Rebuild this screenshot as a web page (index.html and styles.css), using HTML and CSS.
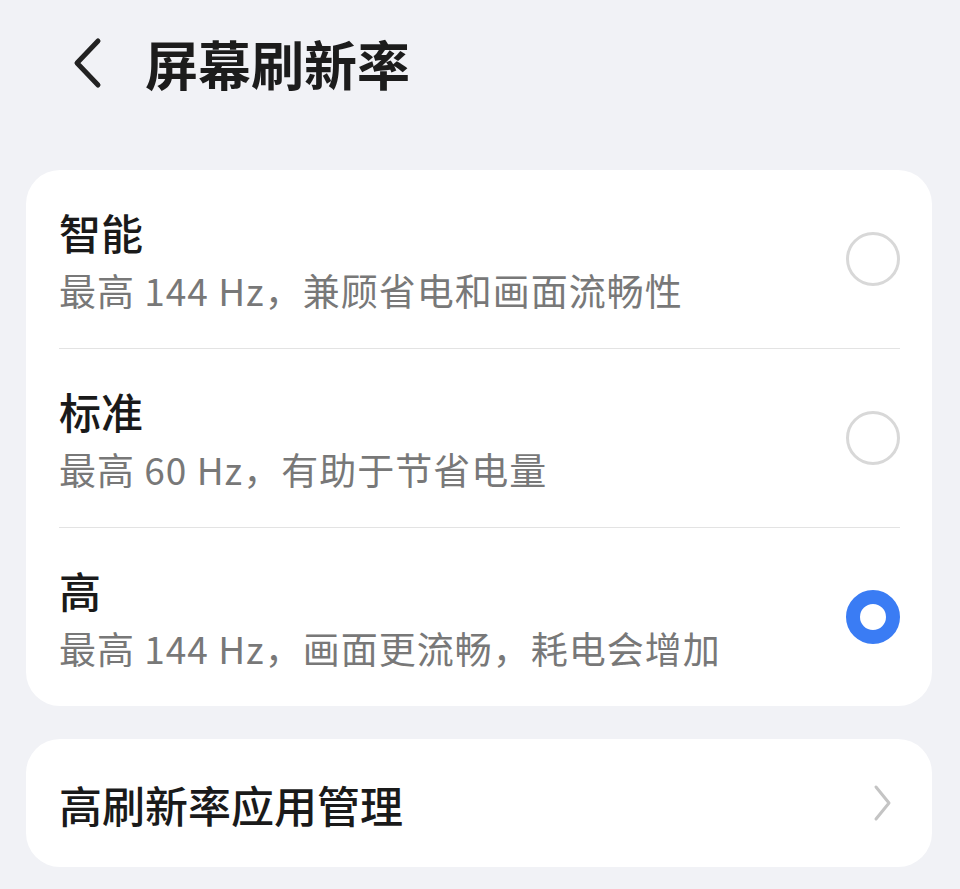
FILE: index.html
```html
<!DOCTYPE html>
<html lang="zh-CN">
<head>
<meta charset="utf-8">
<title>屏幕刷新率</title>
<link rel="stylesheet" href="styles.css">
</head>
<body>
<div class="page">
  <header class="header">
    <span class="back">
      <svg width="34" height="52" viewBox="0 0 34 52"><path d="M27 4 L6 26 L27 48" fill="none" stroke="#222" stroke-width="5" stroke-linecap="round" stroke-linejoin="round"/></svg>
    </span>
    <h1 class="title">屏幕刷新率</h1>
  </header>

  <section class="card">
    <div class="row">
      <div class="text">
        <div class="item-title">智能</div>
        <div class="item-sub">最高 144 Hz，兼顾省电和画面流畅性</div>
      </div>
      <span class="radio"></span>
    </div>
    <div class="row">
      <div class="text">
        <div class="item-title">标准</div>
        <div class="item-sub">最高 60 Hz，有助于节省电量</div>
      </div>
      <span class="radio"></span>
    </div>
    <div class="row">
      <div class="text">
        <div class="item-title">高</div>
        <div class="item-sub">最高 144 Hz，画面更流畅，耗电会增加</div>
      </div>
      <span class="radio checked"></span>
    </div>
  </section>

  <section class="card link-card">
    <div class="link-text">高刷新率应用管理</div>
    <svg class="chev" width="24" height="40" viewBox="0 0 24 40"><path d="M5 4 L18 20 L5 36" fill="none" stroke="#c4c4c4" stroke-width="3" stroke-linecap="round" stroke-linejoin="round"/></svg>
  </section>
</div>
</body>
</html>
```

FILE: styles.css
```css
html, body {
  margin: 0;
  padding: 0;
  background: #f1f2f6;
}
body {
  font-family: "Noto Sans CJK SC", "Noto Sans", sans-serif;
  color: #1a1a1a;
}
.page {
  width: 960px;
  height: 889px;
  overflow: hidden;
}
.header {
  height: 126px;
  display: flex;
  align-items: center;
  padding-left: 71px;
}
.back {
  display: flex;
  width: 34px;
  height: 52px;
}
.title {
  margin: 0 0 0 40px;
  font-size: 53px;
  font-weight: 700;
  line-height: 1;
  color: #1c1c1c;
}
.card {
  margin: 44px 28px 0 26px;
  background: #ffffff;
  border-radius: 34px;
  padding: 0 32px 0 33px;
}
.row {
  height: 178px;
  display: flex;
  align-items: center;
  justify-content: space-between;
}
.row + .row {
  border-top: 1px solid #e3e3e3;
}
.text {
  display: flex;
  flex-direction: column;
  padding-top: 1px;
}
.item-title {
  font-size: 42px;
  line-height: 60px;
  font-weight: 500;
  color: #1a1a1a;
}
.item-sub {
  font-size: 37px;
  line-height: 56px;
  letter-spacing: 1px;
  color: #787878;
}
.radio {
  width: 54px;
  height: 54px;
  box-sizing: border-box;
  border-radius: 50%;
  border: 3px solid #d8d8d8;
  flex: none;
}
.radio.checked {
  border: 14px solid #3a7cf4;
  background: #fff;
}
.link-card {
  margin-top: 33px;
  height: 128px;
  display: flex;
  align-items: center;
  justify-content: space-between;
  padding-right: 37px;
}
.link-text {
  font-size: 43px;
  font-weight: 500;
  line-height: 1;
  padding-top: 2px;
}
.chev {
  flex: none;
}
```
